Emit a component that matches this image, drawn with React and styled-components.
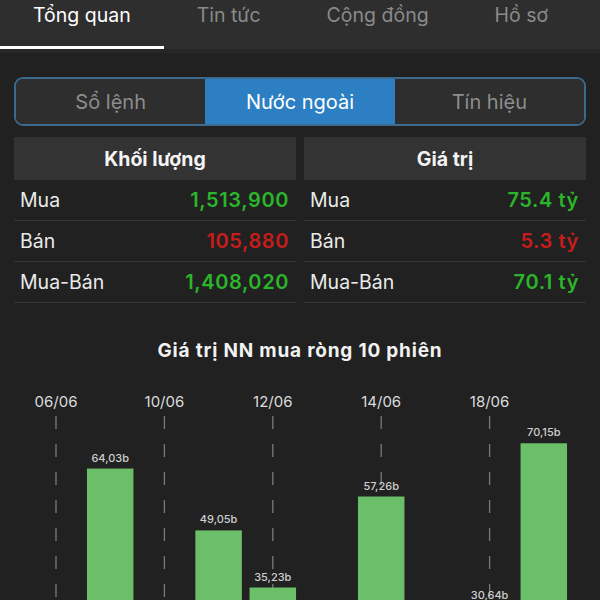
import React, { useState } from 'react';
import styled, { createGlobalStyle, css } from 'styled-components';

const GlobalStyle = createGlobalStyle`
  body {
    margin: 0;
    background: #212121;
    font-family: Inter, "Noto Sans", sans-serif;
    color: #ececec;
  }
`;

const TabBar = styled.nav`
  display: flex;
  height: 49px;
  background: #2e2e2e;
  border-bottom: 4px solid #272727;
`;
const Tab = styled.div`
  position: relative;
  padding: 3px 33px 0;
  font-size: 19.5px;
  line-height: 24px;
  color: ${p => (p.$active ? '#ffffff' : '#8a8a8a')};
  ${p => p.$active && css`
    &::after {
      content: '';
      position: absolute;
      left: 0;
      right: 0;
      bottom: 0;
      height: 3px;
      background: #ffffff;
    }
  `}
`;

const Segmented = styled.div`
  display: grid;
  grid-template-columns: repeat(3, 1fr);
  height: 45px;
  margin: 24px 14px 0;
  border: 2px solid #3c6a8c;
  border-radius: 9px;
  overflow: hidden;
`;
const Segment = styled.div`
  display: flex;
  align-items: center;
  justify-content: center;
  font-size: 20px;
  background: ${p => (p.$active ? '#2b7fc2' : '#2e2e2e')};
  color: ${p => (p.$active ? '#ffffff' : '#8d8d8d')};
`;

const Tables = styled.div`
  display: grid;
  grid-template-columns: 1fr 1fr;
  gap: 8px;
  margin: 11px 14px 0;
`;
const Header = styled.div`
  height: 43px;
  display: flex;
  align-items: center;
  justify-content: center;
  background: #333333;
  font-size: 19.5px;
  font-weight: 700;
  color: #f4f4f4;
`;
const Row = styled.div`
  height: 40px;
  display: flex;
  align-items: center;
  justify-content: space-between;
  padding: 0 7px 0 6px;
  border-bottom: 1px solid #353535;
  font-size: 19.5px;
`;
const Label = styled.span`
  color: #eaeaea;
`;
const Value = styled.span`
  font-size: 20px;
  font-weight: 600;
  letter-spacing: 0.6px;
  color: ${p => (p.$down ? '#c81c1c' : '#2bb52b')};
`;

const ChartTitle = styled.h2`
  margin: 36px 0 0;
  text-align: center;
  font-size: 19px;
  line-height: 24px;
  font-weight: 700;
  letter-spacing: 0.8px;
  color: #f2f2f2;
`;
const ChartSvg = styled.svg`
  display: block;
  margin-top: 16px;
`;

const volume = [
  { label: 'Mua', value: '1,513,900' },
  { label: 'Bán', value: '105,880', down: true },
  { label: 'Mua-Bán', value: '1,408,020' },
];
const worth = [
  { label: 'Mua', value: '75.4 tỷ' },
  { label: 'Bán', value: '5.3 tỷ', down: true },
  { label: 'Mua-Bán', value: '70.1 tỷ' },
];

const sessions = [
  { date: '06/06', value: -12.4 },
  { date: '07/06', value: 64.03 },
  { date: '10/06', value: -8.31 },
  { date: '11/06', value: 49.05 },
  { date: '12/06', value: 35.23 },
  { date: '13/06', value: -20.12 },
  { date: '14/06', value: 57.26 },
  { date: '17/06', value: -5.64 },
  { date: '18/06', value: 30.64 },
  { date: '19/06', value: 70.15 },
];

const fmt = v => `${v.toFixed(2).replace('.', ',')}b`;

const Chart = () => {
  const base = 354;
  const scale = 4.13;
  const barW = 46.5;
  return (
    <ChartSvg width="600" height="360" viewBox="0 0 600 360">
      {sessions.map((s, i) => {
        if (i % 2) return null;
        const x = 56 + i * 54.2;
        return (
          <g key={s.date}>
            <text x={x} y="28" textAnchor="middle" fontSize="15" fill="#dcdcdc" fontFamily="Inter, sans-serif">{s.date}</text>
            <line x1={x} x2={x} y1="37" y2="360" stroke="#7a7a7a" strokeWidth="1.3" strokeDasharray="13 15" />
          </g>
        );
      })}
      {sessions.map((s, i) => {
        if (s.value <= 0) return null;
        const cx = 56 + i * 54.2;
        const top = base - s.value * scale;
        return (
          <g key={s.date}>
            <rect x={cx - barW / 2} y={top} width={barW} height={base - top} fill="#6cbf69" />
            <text x={cx} y={top - 7} textAnchor="middle" fontSize="11" fontWeight="500" fill="#cfcfcf" fontFamily="Inter, sans-serif">{fmt(s.value)}</text>
          </g>
        );
      })}
    </ChartSvg>
  );
};

const Table = ({ title, rows }) => (
  <div>
    <Header>{title}</Header>
    {rows.map(r => (
      <Row key={r.label}>
        <Label>{r.label}</Label>
        <Value $down={r.down}>{r.value}</Value>
      </Row>
    ))}
  </div>
);

const App = () => {
  const [tab] = useState(0);
  const [segment, setSegment] = useState(1);
  const tabs = ['Tổng quan', 'Tin tức', 'Cộng đồng', 'Hồ sơ'];
  const segments = ['Sổ lệnh', 'Nước ngoài', 'Tín hiệu'];

  return (
    <>
      <GlobalStyle />
      <TabBar>
        {tabs.map((t, i) => (
          <Tab key={t} $active={i === tab}>{t}</Tab>
        ))}
      </TabBar>
      <Segmented>
        {segments.map((s, i) => (
          <Segment key={s} $active={i === segment} onClick={() => setSegment(i)}>{s}</Segment>
        ))}
      </Segmented>
      <Tables>
        <Table title="Khối lượng" rows={volume} />
        <Table title="Giá trị" rows={worth} />
      </Tables>
      <ChartTitle>Giá trị NN mua ròng 10 phiên</ChartTitle>
      <Chart />
    </>
  );
};

export default App;
